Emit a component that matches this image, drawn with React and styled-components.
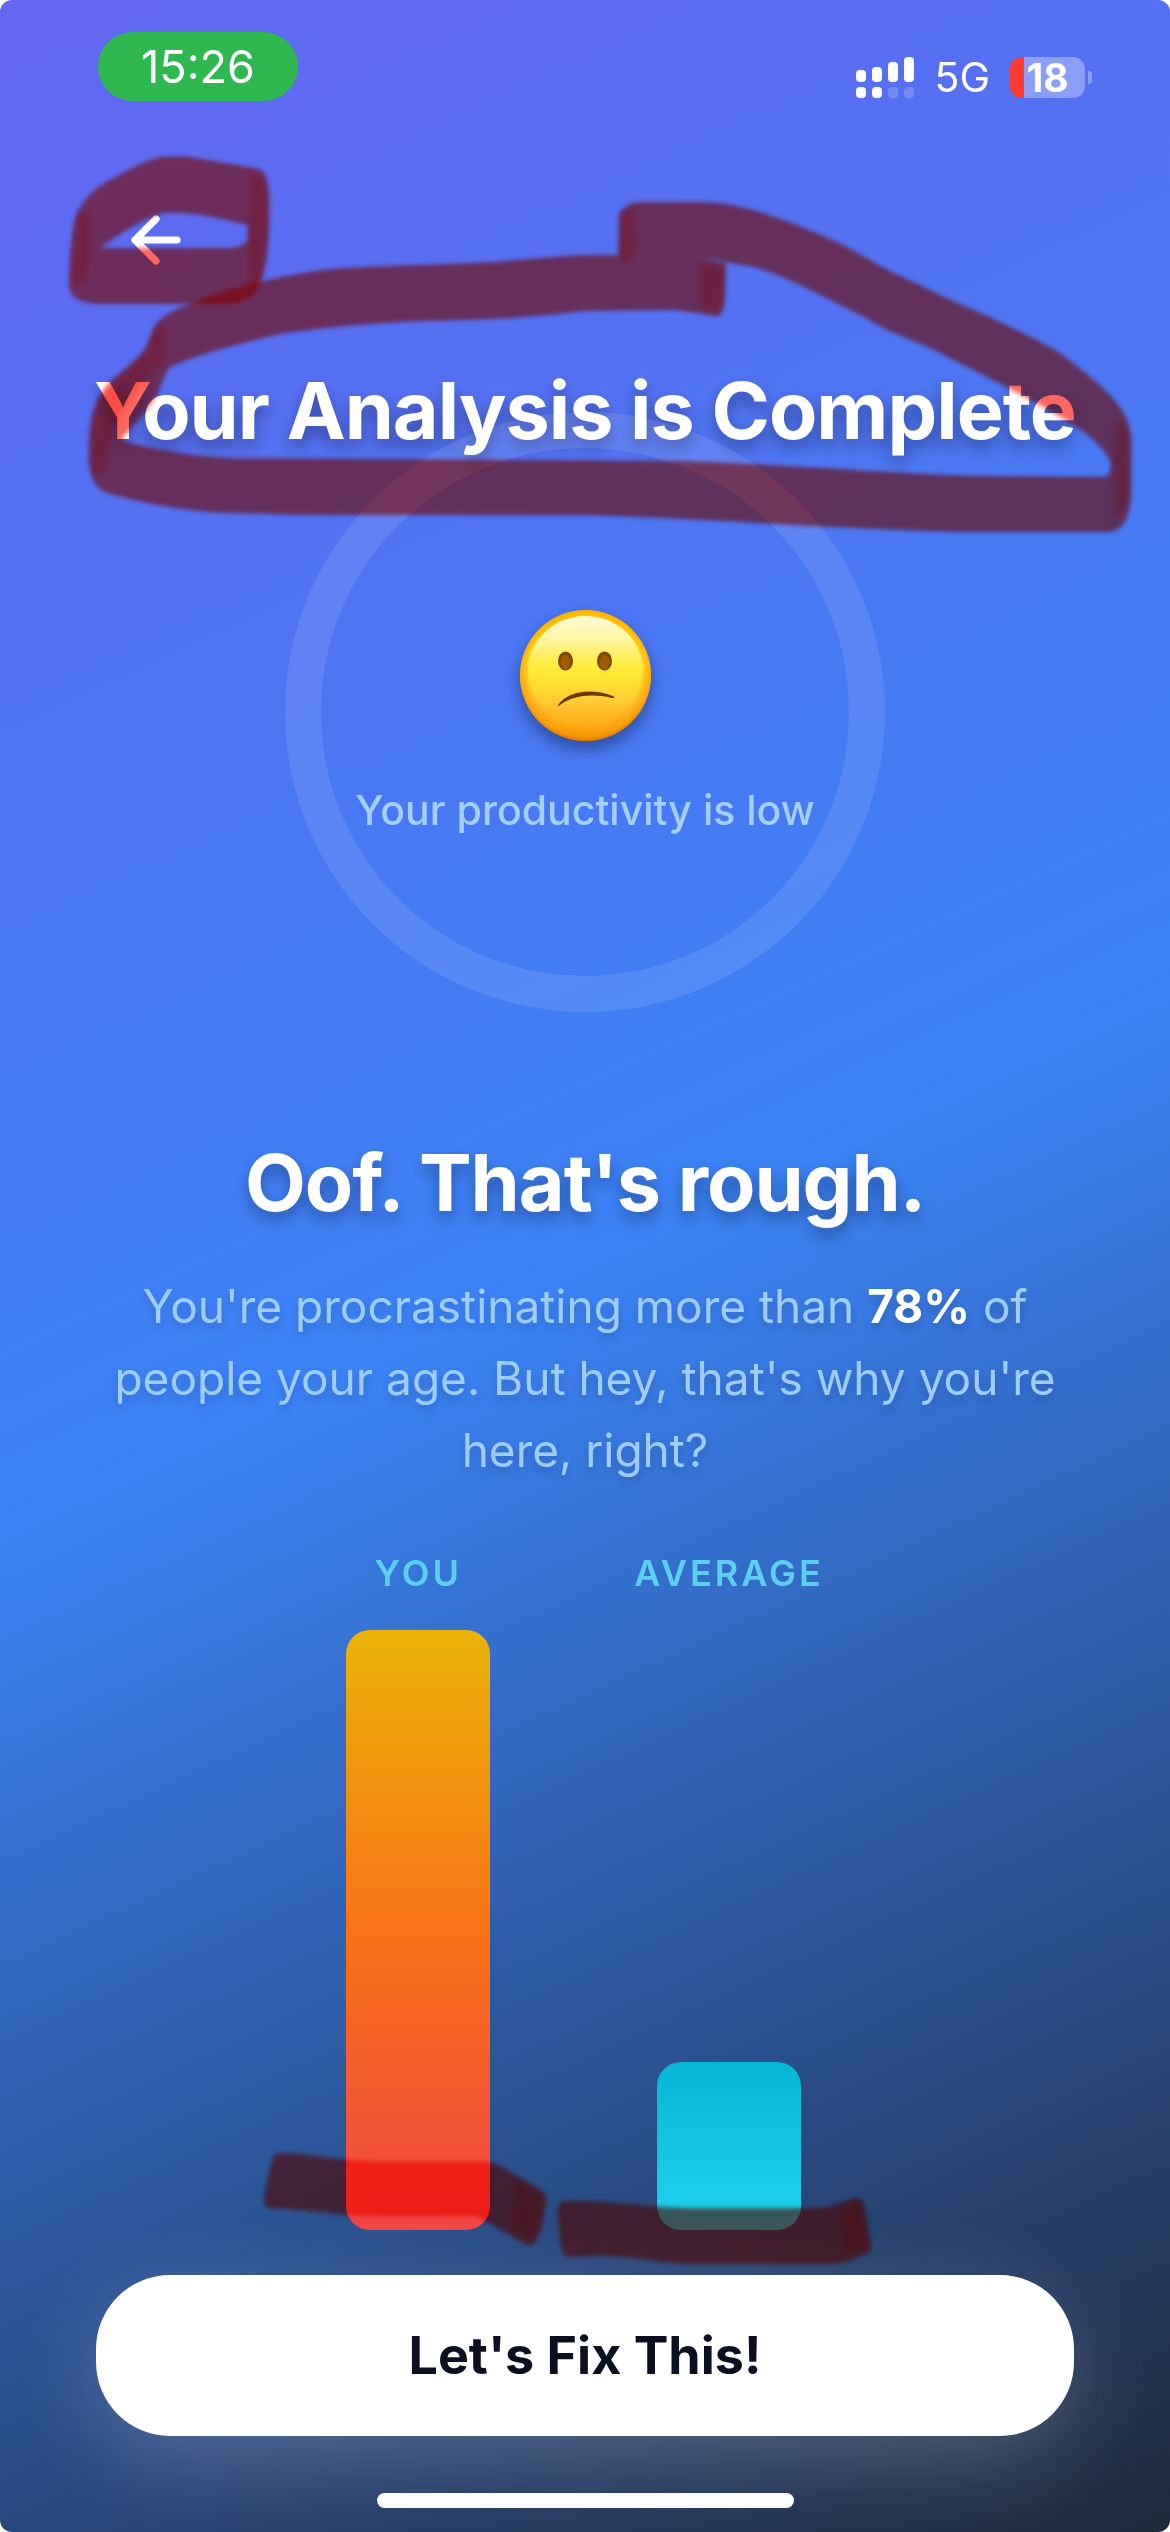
import React from "react";
import styled, { createGlobalStyle } from "styled-components";

const GlobalStyle = createGlobalStyle`
  *, *::before, *::after { box-sizing: border-box; }
  body {
    margin: 0;
    background: #ffffff;
    font-family: Inter, "Liberation Sans", sans-serif;
    -webkit-font-smoothing: antialiased;
  }
`;

const Screen = styled.div`
  position: relative;
  isolation: isolate;
  overflow: hidden;
  display: flex;
  flex-direction: column;
  min-height: 100vh;
  border-radius: 12px;
  background: linear-gradient(155.2deg, #6366f1 0%, #3b82f6 50%, #1e293b 100%);
  color: #ffffff;
`;

const StatusBar = styled.header`
  display: flex;
  justify-content: space-between;
  align-items: flex-start;
  height: 180px;
  padding: 32px 78px 0 98px;
`;

const TimePill = styled.time`
  width: 200px;
  border-radius: 35px;
  background: #2fb750;
  font-size: 45px;
  line-height: 69px;
  text-align: center;
`;

const StatusIcons = styled.div`
  display: flex;
  align-items: center;
  gap: 20px;
  height: 41px;
  margin-top: 25px;
`;

const Network = styled.span`
  font-size: 41px;
  line-height: 41px;
`;

const Battery = styled.div`
  display: flex;
  align-items: center;
  gap: 3px;
`;

const BatteryBody = styled.div`
  width: 75px;
  border-radius: 12px;
  background: linear-gradient(90deg, #ff3b30 14px, rgba(255, 255, 255, 0.32) 14px);
  font-size: 39px;
  font-weight: 700;
  line-height: 41px;
  text-align: center;
`;

const BatteryTip = styled.div`
  width: 4px;
  height: 13px;
  border-radius: 0 4px 4px 0;
  background: rgba(255, 255, 255, 0.32);
`;

const Content = styled.main`
  flex: 1;
  display: flex;
  flex-direction: column;
  align-items: center;
  padding: 0 96px;
`;

const BackButton = styled.button`
  align-self: flex-start;
  display: grid;
  place-items: center;
  width: 120px;
  height: 120px;
  padding: 0;
  border: 0;
  background: none;
  color: #ffffff;
`;

const headingText = `
  font-size: 79px;
  font-weight: 700;
  line-height: 100px;
  letter-spacing: -1px;
  text-align: center;
  text-shadow: 0 8px 16px rgba(0, 0, 0, 0.32);
`;

const Title = styled.h1`
  ${headingText}
  margin: 60px -24px -48px;
`;

const Ring = styled.section`
  display: flex;
  flex-direction: column;
  align-items: center;
  gap: 39px;
  width: 600px;
  height: 600px;
  padding-top: 162px;
  border: 36px solid rgba(255, 255, 255, 0.1);
  border-radius: 50%;
`;

const RingLabel = styled.p`
  margin: 0;
  color: #a3d0fb;
  font-size: 41px;
  font-weight: 500;
  line-height: 60px;
  white-space: nowrap;
`;

const Headline = styled.h2`
  ${headingText}
  margin: 120px 0 0;
`;

const Summary = styled.p`
  margin: 38px 0 0;
  color: #9fcdf7;
  font-size: 46px;
  line-height: 72px;
  text-align: center;
  text-shadow: 0 6px 9px rgba(0, 0, 0, 0.15);

  strong {
    color: #ffffff;
    font-weight: 700;
  }
`;

const Chart = styled.section`
  display: flex;
  justify-content: center;
  gap: 144px;
  margin-top: 63px;
`;

const Column = styled.div`
  display: flex;
  flex-direction: column;
  align-items: center;
  gap: 33px;
`;

const ColumnLabel = styled.span`
  color: #5dcfef;
  font-size: 36px;
  font-weight: 600;
  line-height: 48px;
  letter-spacing: 3px;
`;

const Track = styled.div`
  display: flex;
  align-items: flex-end;
  width: 144px;
  height: 600px;
`;

const Bar = styled.div`
  width: 100%;
  height: ${({ $share }) => $share}%;
  border-radius: 24px;
  background: linear-gradient(180deg, ${({ $stops }) => $stops});
`;

const ActionButton = styled.button`
  align-self: stretch;
  height: 161px;
  margin-top: 45px;
  border: 0;
  border-radius: 74px;
  background: #ffffff;
  color: #0a1020;
  font-family: inherit;
  font-size: 52px;
  font-weight: 700;
  box-shadow: 0 24px 90px rgba(255, 255, 255, 0.2);
`;

const HomeIndicator = styled.div`
  align-self: center;
  width: 417px;
  height: 15px;
  margin: 57px 0 24px;
  border-radius: 8px;
  background: #fcfcfc;
`;

const Marker = styled.svg`
  position: absolute;
  top: 0;
  left: 0;
  width: 100%;
  pointer-events: none;
  mix-blend-mode: ${({ $blend }) => $blend};

  path {
    fill: ${({ $ink }) => $ink};
    mix-blend-mode: ${({ $blend }) => $blend};
  }
`;

const markerStrokes = [
  // loop round the back arrow
  "M69 285 C70 255 71 230 76 215 C82 202 92 190 105 183 C125 172 145 160 160 157 C175 156 190 156 202 159 L255 168 C265 171 268 176 269 195 C270 225 268 255 263 276 C257 296 246 304 225 304 L100 304 C80 303 69 298 69 285Z M100 248 L230 248 C240 247 248 243 248 238 L248 225 C220 219 200 212 165 213 C145 217 118 235 100 248Z",
  // loop round the title
  "M680 255 C700 256 712 260 726 264 L725 300 C723 312 721 317 716 316 L675 310 L585 311 C540 316 500 320 425 321 C370 323 320 328 280 334 C240 343 200 354 170 367 C163 374 160 395 150 405 C140 420 128 430 121 440 C145 448 190 456 230 458 L520 460 L680 461 C760 463 870 472 975 476 L1104 477 Q1111 476 1111 462 C1100 442 1080 428 1060 417 C1020 393 975 371 930 348 C900 335 880 328 868 319 C830 300 790 278 755 267 C730 264 705 256 680 255Z M680 255 L585 255 C540 257 510 262 470 263 C410 266 370 265 315 271 C270 278 220 290 187 305 C165 314 155 320 150 338 C146 352 138 358 112 380 C95 397 90 415 89 440 C88 465 88 485 107 493 C130 500 180 511 225 513 L310 515 L580 515 C680 517 850 530 970 532 L1110 532 C1125 529 1131 515 1131 490 L1131 440 C1130 410 1112 393 1060 353 C1010 324 960 305 930 290 C910 280 890 272 870 260 C830 236 790 222 760 212 C740 206 720 202 700 202 L640 202 Q629 202 619 213 L618 255Z",
  // underline below the first bar
  "M277 2153 C310 2153 345 2161 380 2162 L490 2162 Q498 2163 510 2172 L541 2190 Q549 2194 546 2205 C543 2220 540 2249 527 2245 L482 2219 Q477 2216 465 2216 C400 2217 350 2217 330 2213 L270 2208 Q263 2208 264 2198 C266 2188 271 2153 277 2153Z",
  // underline below the second bar
  "M565 2201 C610 2200 650 2208 690 2208 L815 2208 C835 2207 845 2201 855 2198 Q863 2196 865 2210 L871 2244 Q873 2250 866 2254 C850 2260 845 2264 825 2264 L695 2264 C660 2263 640 2257 600 2256 L570 2257 Q562 2256 561 2246 L557 2214 Q557 2202 565 2201Z",
];

// places where the pen changes direction and the ink is laid down twice
const markerTurns = [
  "M251 174 Q265 174 267 195 C268 230 266 255 261 276 Q255 292 248 292 L248 225Z",
  "M78 217 Q86 206 90 217 L89 268 Q85 283 79 284 Q71 282 72 275Z",
  "M153 332 Q163 315 166 335 L163 365 C150 370 125 400 115 428 Q108 440 107 465 Q100 480 93 470 C88 430 97 400 114 382 C137 360 149 355 153 332Z",
  "M1114 425 Q1126 414 1129 440 L1129 490 Q1128 513 1114 520Z",
  "M621 215 L634 206 L636 252 Q628 268 620 262Z",
  "M700 262 L724 266 L723 298 Q721 312 715 312 L700 308Z",
  "M838 2212 L858 2203 L867 2244 L846 2256Z",
  "M514 2180 L541 2195 Q542 2220 530 2240 L510 2228Z",
];

const MarkerLayer = ({ blend, ink, turnOpacity }) => {
  const id = `soft-${blend}`;
  return (
    <Marker $blend={blend} $ink={ink} viewBox="0 0 1170 2532" aria-hidden="true">
      <filter id={id} x="-10%" y="-10%" width="120%" height="120%">
        <feGaussianBlur stdDeviation="2" />
      </filter>
      <filter id={`${id}-turn`} x="-50%" y="-20%" width="200%" height="140%">
        <feGaussianBlur stdDeviation="3" />
      </filter>
      {markerStrokes.map((d) => (
        <path key={d} d={d} fillRule="evenodd" filter={`url(#${id})`} />
      ))}
      {markerTurns.map((d) => (
        <path key={d} d={d} opacity={turnOpacity} filter={`url(#${id}-turn)`} />
      ))}
    </Marker>
  );
};

const ArrowLeft = () => (
  <svg width="72" height="72" viewBox="0 0 24 24" fill="none" stroke="currentColor" strokeWidth="2.4" strokeLinecap="round" strokeLinejoin="round" aria-hidden="true">
    <path d="M19 12H5M12 19l-7-7 7-7" />
  </svg>
);

const Signal = () => (
  <svg width="58" height="41" viewBox="0 0 58 41" fill="#ffffff" aria-hidden="true">
    <rect x="0" y="13" width="10" height="12" rx="4" />
    <rect x="16" y="10" width="10" height="15" rx="4" />
    <rect x="32" y="5" width="10" height="20" rx="4" />
    <rect x="48" y="0" width="10" height="25" rx="4" />
    <rect x="0" y="30" width="10" height="11" rx="4" />
    <rect x="16" y="30" width="10" height="11" rx="4" />
    <rect x="32" y="30" width="10" height="11" rx="4" opacity="0.2" />
    <rect x="48" y="30" width="10" height="11" rx="4" opacity="0.2" />
  </svg>
);

const FaceSvg = styled.svg`
  flex: none;
  overflow: visible;
  filter: drop-shadow(0 8px 8px rgba(0, 0, 0, 0.36));
`;

const ConfusedFace = () => (
  <FaceSvg width="131" height="131" viewBox="0 0 131 131" role="img" aria-label="Confused face">
    <defs>
      <linearGradient id="face-base" x1="0" y1="0" x2="0" y2="1">
        <stop offset="0" stopColor="#ffc400" />
        <stop offset="0.4" stopColor="#ffe424" />
        <stop offset="0.7" stopColor="#ffc636" />
        <stop offset="0.88" stopColor="#ffae18" />
        <stop offset="1" stopColor="#e88a08" />
      </linearGradient>
      <radialGradient id="face-rim" cx="0.5" cy="0.47" r="0.54">
        <stop offset="0.76" stopColor="#ff9a00" stopOpacity="0" />
        <stop offset="0.92" stopColor="#fb9400" stopOpacity="0.65" />
        <stop offset="1" stopColor="#cf6c00" stopOpacity="0.9" />
      </radialGradient>
      <linearGradient id="face-shine" x1="0" y1="0" x2="0" y2="1">
        <stop offset="0" stopColor="#fffbd8" />
        <stop offset="0.22" stopColor="#fff9b0" stopOpacity="0.9" />
        <stop offset="0.5" stopColor="#fff03a" stopOpacity="0.6" />
        <stop offset="0.85" stopColor="#ffe030" stopOpacity="0" />
      </linearGradient>
    </defs>
    <circle cx="65.500" cy="65.500" r="65.500" fill="url(#face-base)" />
    <circle cx="65.500" cy="65.500" r="65.500" fill="url(#face-rim)" />
    <ellipse cx="65.500" cy="62" rx="58" ry="56" fill="url(#face-shine)" />
    <ellipse cx="45.500" cy="51" rx="7.500" ry="9.500" fill="#804600" />
    <ellipse cx="84.500" cy="51" rx="7.500" ry="9.500" fill="#804600" />
    <ellipse cx="45.500" cy="52" rx="5" ry="7" fill="#a15c00" />
    <ellipse cx="84.500" cy="52" rx="5" ry="7" fill="#a15c00" />
    <path d="M38 95 C47 82 70 77 93 86 Q96 88 92 88 C70 83 52 86 40 95 Q37 97 38 95Z" fill="#6e3500" />
  </FaceSvg>
);

const columns = [
  { label: "YOU", share: 100, stops: "#eab308, #f97316, #ef4444" },
  { label: "AVERAGE", share: 28, stops: "#06b6d4, #22d3ee" },
];

export default function App() {
  return (
    <>
      <GlobalStyle />
      <Screen>
        <StatusBar>
          <TimePill>15:26</TimePill>
          <StatusIcons>
            <Signal />
            <Network>5G</Network>
            <Battery>
              <BatteryBody>18</BatteryBody>
              <BatteryTip />
            </Battery>
          </StatusIcons>
        </StatusBar>
        <Content>
          <BackButton type="button" aria-label="Back">
            <ArrowLeft />
          </BackButton>
          <Title>Your Analysis is Complete</Title>
          <Ring>
            <ConfusedFace />
            <RingLabel>Your productivity is low</RingLabel>
          </Ring>
          <Headline>Oof. That's rough.</Headline>
          <Summary>
            You're procrastinating more than <strong>78%</strong> of people your age. But hey, that's why you're here, right?
          </Summary>
          <Chart>
            {columns.map(({ label, share, stops }) => (
              <Column key={label}>
                <ColumnLabel>{label}</ColumnLabel>
                <Track>
                  <Bar $share={share} $stops={stops} />
                </Track>
              </Column>
            ))}
          </Chart>
          <ActionButton type="button">Let's Fix This!</ActionButton>
        </Content>
        <HomeIndicator />
        <MarkerLayer blend="multiply" ink="#fc6860" turnOpacity="0.45" />
        <MarkerLayer blend="screen" ink="#1e0000" turnOpacity="0.3" />
      </Screen>
    </>
  );
}
